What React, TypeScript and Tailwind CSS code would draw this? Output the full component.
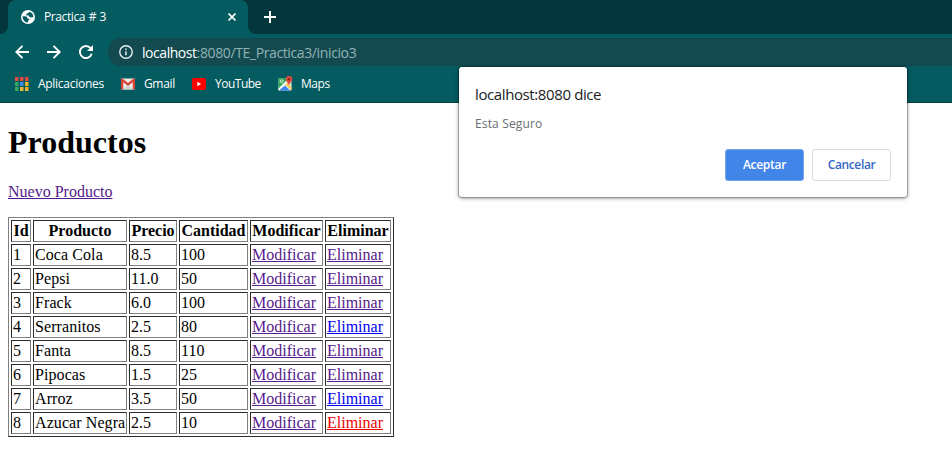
import React from "react";

const products = [
  ["1", "Coca Cola", "8.5", "100", "text-[#551a8b]"],
  ["2", "Pepsi", "11.0", "50", "text-[#551a8b]"],
  ["3", "Frack", "6.0", "100", "text-[#551a8b]"],
  ["4", "Serranitos", "2.5", "80", "text-[#0000ee]"],
  ["5", "Fanta", "8.5", "110", "text-[#551a8b]"],
  ["6", "Pipocas", "1.5", "25", "text-[#551a8b]"],
  ["7", "Arroz", "3.5", "50", "text-[#0000ee]"],
  ["8", "Azucar Negra", "2.5", "10", "text-[#ee0000]"],
];

const cell =
  "h-[22px] p-px leading-[18px] border border-t-[#2c2c2c] border-l-[#2c2c2c] border-r-[#808080] border-b-[#808080] whitespace-nowrap";

function Globe() {
  return (
    <svg className="h-[14px] w-[14px] shrink-0" viewBox="0 0 14 14">
      <circle cx="7" cy="7" r="7" fill="#fff" />
      <path d="M1.6 6.2c1.500.1 3.300 0 4.200.6.7.5.1 1.300.9 1.600.9.300 1.700.1 1.600 1-.1.800-1.200.7-1.300 1.500l-.1 1.600C4 12.400 1.400 9.600 1.600 6.200Z" fill="#045b60" />
      <path d="M8.400 1.700C8.500 3 6.600 2.600 6.300 3.500c-.2.800-1.400.7-1.300 1.500.1.600 2.100.2 2.700.6.600.4.300 1.400 1.200 1.700.9.300 2.300-.2 3.500-.1C12.400 4.300 10.700 2.200 8.400 1.700Z" fill="#045b60" />
    </svg>
  );
}

function AppsIcon() {
  const colors = ["#e04a3f", "#e04a3f", "#e04a3f", "#35a564", "#4289e8", "#eab52d", "#35a564", "#eab52d", "#eab52d"];
  return (
    <svg className="h-[14px] w-[14px] shrink-0" viewBox="0 0 14 14">
      {colors.map((c, i) => (
        <rect key={i} x={(i % 3) * 5} y={Math.floor(i / 3) * 5} width="3.500" height="4" fill={c} />
      ))}
    </svg>
  );
}

function GmailIcon() {
  return (
    <svg className="h-[12px] w-[14px] shrink-0" viewBox="0 0 14 12">
      <rect y="0.500" width="14" height="11" rx="1" fill="#eee" />
      <path d="M2 11.500 7 6.500l5 5Z" fill="#d2d2d2" />
      <path d="M0 1.500v9q0 1 1 1h1.300V4.200L7 8l4.700-3.800v7.300H13q1 0 1-1v-9q0-1-1-1h-.6L7 5 1.600.5H1q-1 0-1 1Z" fill="#dc463b" />
    </svg>
  );
}

function YouTubeIcon() {
  return (
    <svg className="h-[12px] w-[14px] shrink-0" viewBox="0 0 14 12">
      <rect width="14" height="12" rx="2" fill="#f00" />
      <path d="M5.300 3.700v4.600L9.200 6Z" fill="#fff" />
    </svg>
  );
}

function MapsIcon() {
  return (
    <svg className="relative -top-px h-[15px] w-[15px] shrink-0" viewBox="0 0 15 15">
      <rect x="0.500" y="2" width="13" height="12.500" rx="1" fill="#e9e9e9" />
      <path d="M.5 3q0-1 1-1h8L7 8 .5 14Z" fill="#35a65b" />
      <path d="M.5 12.500 9 4l1.500 1.500-9 9h-1Z" fill="#fff" />
      <path d="M.8 14.500h11.200L7 9.500Z" fill="#4285f4" />
      <path d="m7.200 8.200 1.500-1.500 4.800 4.800v2.500Z" fill="#f9c938" />
      <circle cx="3.600" cy="5.200" r="1.400" fill="none" stroke="#fff" strokeWidth="0.800" />
      <path d="M11 0a3.300 3.300 0 0 1 3.300 3.300C14.300 5.800 11.600 6.500 11 10c-.6-3.500-3.300-4.200-3.300-6.700A3.300 3.300 0 0 1 11 0Z" fill="#e34a3f" />
      <circle cx="11" cy="3.300" r="1.200" fill="#8e1f1a" />
    </svg>
  );
}

function Browser() {
  return (
    <header className="h-[103px] border-b border-[#044147] bg-[#045b60] text-white">
      <div className="flex h-[34px] bg-[#03373c]">
        <div className="flex w-2 items-end bg-[#045b60]">
          <div className="h-full w-full rounded-br-[8px] bg-[#03373c]" />
        </div>
        <div className="flex w-60 items-center rounded-t-[8px] bg-[#045b60] pl-[13px] pr-3">
          <Globe />
          <span className="ml-[9px] grow whitespace-nowrap text-[12px] tracking-[-0.39px] [word-spacing:0.8px]">Practica # 3</span>
          <svg className="h-2 w-2" viewBox="0 0 8 8" stroke="#fff" strokeWidth="1.600">
            <path d="m.5.5 7 7m0-7-7 7" />
          </svg>
        </div>
        <div className="grow bg-[#045b60]">
          <div className="flex h-full items-center rounded-bl-[8px] bg-[#03373c] pl-4">
            <svg className="h-3 w-3" viewBox="0 0 12 12" stroke="#fff" strokeWidth="2">
              <path d="M6 0v12M0 6h12" />
            </svg>
          </div>
        </div>
      </div>
      <div className="flex h-9 items-center pl-[15px]">
        <svg className="h-[14px] w-[78px] shrink-0" viewBox="0 0 78 14" fill="none" stroke="#fff" strokeWidth="1.900">
          <path d="M14 7H1.500M7.500.8 1.300 7l6.200 6.200M32 7h12.500M38.500.8 44.700 7l-6.200 6.200" />
          <path d="M75.600 3.200A6 6 0 1 0 76.700 8.800" />
          <path d="M78 0v6h-6Z" fill="#fff" stroke="none" />
        </svg>
        <div className="ml-[15px] flex h-7 grow items-center rounded-l-full bg-[#124a50] pl-[11px]">
          <svg className="h-[14px] w-[14px]" viewBox="0 0 14 14" fill="none" stroke="#e8f0f0">
            <circle cx="7" cy="7" r="6.200" strokeWidth="1.400" />
            <path d="M7 6.200v4M7 3.500V5" strokeWidth="1.500" />
          </svg>
          <span className="ml-[9px] whitespace-nowrap text-[14px] tracking-[-0.38px] text-[#92b2b5]">
            <span className="tracking-[-0.45px] text-white">localhost</span>:8080/TE_Practica3/inicio3
          </span>
        </div>
      </div>
      <nav className="flex h-[28px] items-center whitespace-nowrap pl-[15px] text-[12px]">
        <AppsIcon />
        <span className="ml-[9px] w-[83px] tracking-[-0.28px]">Aplicaciones</span>
        <GmailIcon />
        <span className="ml-[9px] w-[48px] tracking-[-0.35px]">Gmail</span>
        <YouTubeIcon />
        <span className="ml-[9px] w-[63px] tracking-[-0.5px]">YouTube</span>
        <MapsIcon />
        <span className="ml-[8px] tracking-[-0.45px]">Maps</span>
      </nav>
    </header>
  );
}

function ConfirmDialog() {
  return (
    <div className="absolute left-[459px] top-[67px] flex h-[130px] w-[448px] flex-col rounded-[3px] bg-white px-4 pb-4 pt-[17px] shadow-[0_1px_4px_rgba(0,0,0,0.45),0_0_1px_1px_rgba(0,0,0,0.25)]">
      <h2 className="whitespace-nowrap text-[15px] leading-[20px] tracking-[-0.39px] text-[#202124]">localhost:8080 dice</h2>
      <p className="mt-[11px] text-[12px] leading-[18px] tracking-[0.15px] text-[#6a6d71]">Esta Seguro</p>
      <div className="mt-auto flex justify-end gap-2 text-[12px] font-semibold">
        <button className="h-8 w-[79px] rounded-[3px] border border-[#73a8f0] bg-[#4285e9] tracking-[-0.3px] text-white">Aceptar</button>
        <button className="h-8 w-[79px] rounded-[3px] border border-[#dadce0] bg-white tracking-[-0.35px] text-[#3367c5]">Cancelar</button>
      </div>
    </div>
  );
}

export default function App() {
  return (
    <div className="relative h-[459px] w-[952px] overflow-hidden bg-white font-['Open_Sans','Noto_Sans',sans-serif]">
      <Browser />
      <main className="px-2 pt-[21px] font-['Liberation_Serif','Times_New_Roman',serif] text-[16px] leading-[18px] text-black">
        <h1 className="text-[32px] font-bold leading-[37px]">Productos</h1>
        <p className="mt-[22px]">
          <a className="text-[#551a8b] underline">Nuevo Producto</a>
        </p>
        <table className="mt-4 w-[386px] table-fixed border-separate border-spacing-[2px] border border-b-[#2c2c2c] border-l-[#808080] border-r-[#2c2c2c] border-t-[#808080]">
          <colgroup>
            <col className="w-[20px]" />
            <col className="w-[94px]" />
            <col className="w-[48px]" />
            <col className="w-[69px]" />
            <col className="w-[73px]" />
            <col className="w-[66px]" />
          </colgroup>
          <thead>
            <tr>
              {["Id", "Producto", "Precio", "Cantidad", "Modificar", "Eliminar"].map((h) => (
                <th key={h} className={cell + " text-center font-bold"}>{h}</th>
              ))}
            </tr>
          </thead>
          <tbody>
            {products.map(([id, name, price, qty, color]) => (
              <tr key={id}>
                <td className={cell}>{id}</td>
                <td className={cell + " tracking-[0.08px]"}>{name}</td>
                <td className={cell}>{price}</td>
                <td className={cell}>{qty}</td>
                <td className={cell}><a className="text-[#551a8b] underline">Modificar</a></td>
                <td className={cell}><a className={color + " underline"}>Eliminar</a></td>
              </tr>
            ))}
          </tbody>
        </table>
      </main>
      <ConfirmDialog />
    </div>
  );
}
